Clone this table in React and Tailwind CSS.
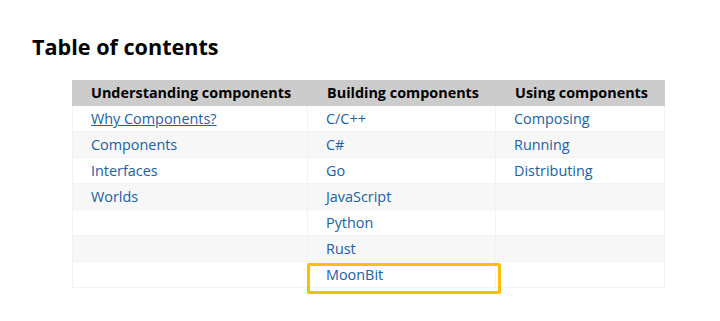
import React from 'react'

const columns = [
	{ title: 'Understanding components', items: ['Why Components?', 'Components', 'Interfaces', 'Worlds'] },
	{ title: 'Building components', items: ['C/C++', 'C#', 'Go', 'JavaScript', 'Python', 'Rust', 'MoonBit'] },
	{ title: 'Using components', items: ['Composing', 'Running', 'Distributing'] },
]

const widths = ['w-[236px]', 'w-[188px]', 'w-[169px]']
const rowCount = 7

export default function App() {
	return (
		<div className="min-h-[321px] bg-white pl-[32px] pt-[34px] font-['Open_Sans',sans-serif] text-black">
			<h2 className="text-[21.6px] font-bold leading-[26.4px]">Table of contents</h2>

			<div className="ml-[40px] mt-[20px] w-[593px] text-[14.4px]">
				<div className="flex h-[26px] bg-[#cccccc] font-bold leading-[26px] whitespace-nowrap">
					{columns.map((col, i) => (
						<div key={col.title} className={`${widths[i]} pl-[19px]`}>
							{col.title}
						</div>
					))}
				</div>

				<div className="border-l border-[#f2f2f2]">
					{Array.from({ length: rowCount }).map((_, r) => (
						<div
							key={r}
							className={`flex h-[26px] border-b border-[#f2f2f2] leading-[25px] ${r % 2 === 1 ? 'bg-[#f7f7f7]' : 'bg-white'}`}
						>
							{columns.map((col, c) => {
								const item = col.items[r]
								const highlight = item === 'MoonBit'
								return (
									<div
										key={c}
										className={`relative ${widths[c]} border-r border-[#f2f2f2] whitespace-nowrap text-[#20609f] ${c === 0 ? '-ml-px pl-[19px]' : 'pl-[18px]'}`}
									>
										{item && (
											<span className={item === 'Why Components?' ? 'underline' : ''}>{item}</span>
										)}
										{highlight && (
											<div className="absolute left-[-1px] top-[1px] h-[31px] w-[194px] rounded-[2px] border-[3px] border-[#fbbf00]" />
										)}
									</div>
								)
							})}
						</div>
					))}
				</div>
			</div>
		</div>
	)
}
